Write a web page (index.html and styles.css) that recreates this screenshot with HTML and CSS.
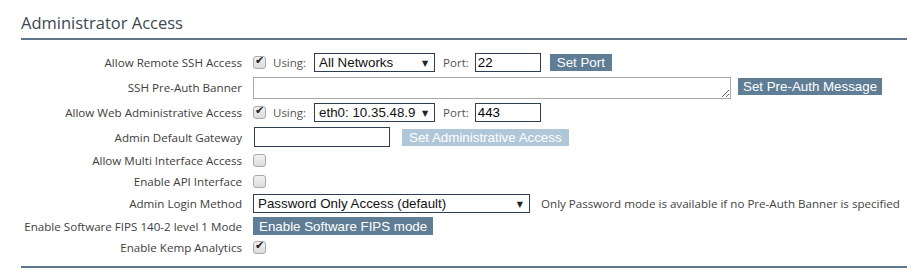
FILE: index.html
```html
<!DOCTYPE html>
<html lang="en">
  <head>
    <meta charset="UTF-8" />
    <title>Administrator Access</title>
    <link rel="stylesheet" href="styles.css">
  </head>
  <body>
    <div class="panel">
      <h2 class="title">Administrator Access</h2>
      <div class="rows">
        <div class="row r1">
          <span class="lbl">Allow Remote SSH Access</span>
          <div class="ctl">
            <input type="checkbox" class="chk" checked />
            <span class="txt using">Using:</span>
            <span class="sel w120"><select><option>All Networks</option></select></span>
            <span class="txt port">Port:</span>
            <input type="text" class="inp port-inp" value="22" />
            <button class="btn">Set Port</button>
          </div>
        </div>
        <div class="row r2">
          <span class="lbl">SSH Pre-Auth Banner</span>
          <div class="ctl">
            <textarea class="banner"></textarea>
            <button class="btn b-msg">Set Pre-Auth Message</button>
          </div>
        </div>
        <div class="row r3">
          <span class="lbl">Allow Web Administrative Access</span>
          <div class="ctl">
            <input type="checkbox" class="chk" checked />
            <span class="txt using">Using:</span>
            <span class="sel w120"><select><option>eth0: 10.35.48.9</option></select></span>
            <span class="txt port">Port:</span>
            <input type="text" class="inp port-inp" value="443" />
          </div>
        </div>
        <div class="row r4">
          <span class="lbl">Admin Default Gateway</span>
          <div class="ctl">
            <input type="text" class="inp gw" />
            <button class="btn off" disabled>Set Administrative Access</button>
          </div>
        </div>
        <div class="row r5">
          <span class="lbl">Allow Multi Interface Access</span>
          <div class="ctl"><input type="checkbox" class="chk" /></div>
        </div>
        <div class="row r6">
          <span class="lbl">Enable API Interface</span>
          <div class="ctl"><input type="checkbox" class="chk" /></div>
        </div>
        <div class="row r7">
          <span class="lbl">Admin Login Method</span>
          <div class="ctl">
            <span class="sel w277"><select><option>Password Only Access (default)</option></select></span>
            <span class="note">Only Password mode is available if no Pre-Auth Banner is specified</span>
          </div>
        </div>
        <div class="row r8">
          <span class="lbl">Enable Software FIPS 140-2 level 1 Mode</span>
          <div class="ctl"><button class="btn">Enable Software FIPS mode</button></div>
        </div>
        <div class="row r9">
          <span class="lbl">Enable Kemp Analytics</span>
          <div class="ctl"><input type="checkbox" class="chk" checked /></div>
        </div>
      </div>
    </div>
  </body>
</html>
```
FILE: styles.css
```css
body {
  margin: 0;
  background: #fff;
  font-family: "Open Sans", "DejaVu Sans", sans-serif;
  color: #444;
}
.panel {
  margin-left: 21px;
  width: 886px;
  border-bottom: 2px solid #60778b;
  padding-bottom: 8px;
}
.title {
  margin: 0;
  height: 40px;
  padding-top: 11px;
  box-sizing: border-box;
  font-size: 16.5px;
  font-weight: normal;
  color: #3d4854;
  border-bottom: 2px solid #60778b;
}
.rows {
  padding-top: 9px;
}
.row {
  display: flex;
  align-items: center;
}
.r1 { height: 26px; }
.r2 { height: 25px; }
.r3 { height: 25px; }
.r4 { height: 24px; }
.r5 { height: 22px; }
.r6 { height: 21px; }
.r7 { height: 23px; }
.r8 { height: 22px; }
.r9 { height: 21px; }
.lbl {
  width: 221px;
  flex-shrink: 0;
  text-align: right;
  font-size: 11.6px;
  color: #404040;
}
.ctl {
  display: flex;
  align-items: center;
  margin-left: 11px;
}
.txt {
  font-size: 11.5px;
  color: #555;
}
.using {
  margin-left: 7px;
  margin-right: 8px;
}
.port {
  margin-left: 8px;
  margin-right: 6px;
}
.chk {
  appearance: none;
  margin: 0;
  width: 13px;
  height: 13px;
  border: 1px solid #a9a9a9;
  border-radius: 3px;
  background: linear-gradient(#f2f2f2, #dcdcdc);
  box-sizing: border-box;
  position: relative;
}
.chk:checked::after {
  content: "\2714";
  position: absolute;
  left: 1px;
  top: -3px;
  font-size: 11px;
  color: #222;
  font-family: "DejaVu Sans", sans-serif;
}
.sel {
  position: relative;
  display: inline-block;
}
.sel select {
  appearance: none;
  height: 19px;
  border: 1px solid #2c3e50;
  border-radius: 0;
  background: #fff;
  font-family: "Liberation Sans", Arial, sans-serif;
  font-size: 13.33px;
  color: #111;
  padding: 0 0 0 4px;
  margin: 0;
  display: block;
}
.sel::after {
  content: "\25BC";
  position: absolute;
  right: 7px;
  top: 4px;
  font-size: 8px;
  color: #222;
  pointer-events: none;
}
.w120 select { width: 121px; }
.w277 select { width: 277px; }
.inp {
  height: 19px;
  box-sizing: border-box;
  border: 1px solid #2c3e50;
  padding: 0 2px;
  margin: 0;
  font-family: "Liberation Sans", Arial, sans-serif;
  font-size: 13.33px;
  color: #000;
}
.port-inp { width: 66px; }
.gw {
  width: 136px;
  height: 20px;
  margin-left: 1px;
}
.banner {
  width: 478px;
  height: 22px;
  box-sizing: border-box;
  border: 1px solid #aaa;
  margin: 0;
  padding: 0;
}
.btn {
  height: 17px;
  border: 0;
  padding: 0 7px;
  background: #5f7d94;
  color: #fff;
  font-family: "Liberation Sans", Arial, sans-serif;
  font-size: 13.33px;
  line-height: 17px;
  margin-left: 9px;
}
.b-msg {
  margin-left: 7px;
  padding: 0 5px;
  align-self: flex-start;
  margin-top: 1px;
}
.off {
  background: #afc7d8;
  margin-left: 12px;
}
.r8 .btn {
  margin-left: 0;
  height: 18px;
  padding: 0 6px;
}
.note {
  font-size: 11.6px;
  color: #444;
  margin-left: 11px;
}
```
